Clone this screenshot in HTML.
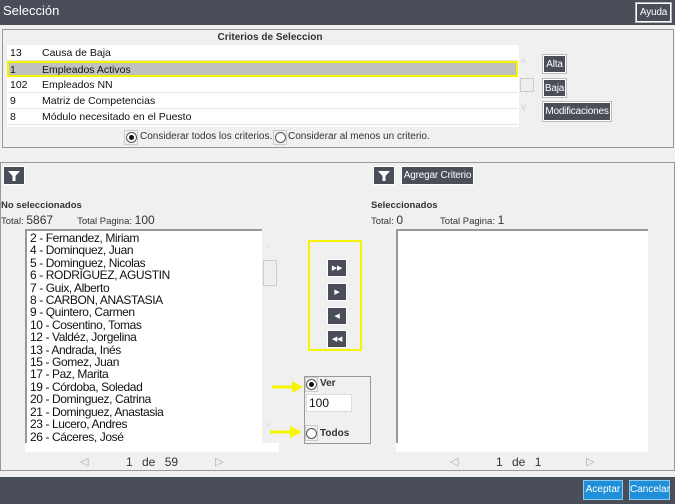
<!DOCTYPE html>
<html><head><meta charset="utf-8"><style>
*{margin:0;padding:0;box-sizing:border-box}
body{width:675px;height:504px;background:#f0f0f0;font-family:"Liberation Sans",sans-serif;position:relative;overflow:hidden;color:#111}
.a{position:absolute}
.dk{background:#4a4e59}
.btn{position:absolute;background:#4a4e59;color:#fff;font-size:10px;border:1px solid #fff;outline:1px solid #bbb;display:flex;align-items:center;justify-content:center;letter-spacing:-0.2px}
.row{position:absolute;left:0;width:511px;height:16px;font-size:10.5px;border-bottom:1px solid #e4e4e4;line-height:17px}
.row span{position:absolute}
.nm{position:absolute;left:3px;font-size:12px;letter-spacing:-0.4px;line-height:12.4px;white-space:nowrap}
.rad{position:absolute;width:11px;height:11px;border:1px solid #555;border-radius:50%;background:#fff}
.rad.on::after{content:"";position:absolute;left:2px;top:2px;width:5px;height:5px;border-radius:50%;background:#111}
.sm{font-size:10px;color:#333}
</style></head><body>
<div class="a dk" style="left:0;top:0;width:675px;height:25px"></div>
<div class="a" style="left:3px;top:3px;color:#fff;font-size:13px">Selección</div>
<div class="btn" style="left:636px;top:3px;width:35px;height:19px;font-size:10px">Ayuda</div>

<div class="a" style="left:2px;top:29px;width:672px;height:119px;border:1px solid #999"></div>
<div class="a" style="left:0;top:32px;width:540px;text-align:center;font-size:10px;font-weight:bold;color:#333">Criterios de Seleccion</div>
<div class="a" style="left:7px;top:45px;width:512px;height:82px;background:#fff;overflow:hidden">
<div class="row" style="top:0"><span style="left:3px">13</span><span style="left:35px">Causa de Baja</span></div>
<div class="row" style="top:16px;background:#c0c0c0;border:2px solid #f5f500;line-height:14px"><span style="left:1px">1</span><span style="left:33px">Empleados Activos</span></div>
<div class="row" style="top:32px"><span style="left:3px">102</span><span style="left:35px">Empleados NN</span></div>
<div class="row" style="top:48px"><span style="left:3px">9</span><span style="left:35px">Matriz de Competencias</span></div>
<div class="row" style="top:64px"><span style="left:3px">8</span><span style="left:35px">Módulo necesitado en el Puesto</span></div>
<div class="row" style="top:80px"><span style="left:3px">2</span><span style="left:35px">Por Edad</span></div>
</div>
<div class="a" style="left:521px;top:58px;color:#ccc;font-size:10px">^</div>
<div class="a" style="left:520px;top:78px;width:14px;height:14px;border:1px solid #ccc;background:#eee"></div>
<div class="a" style="left:521px;top:102px;color:#ccc;font-size:10px">v</div>
<div class="btn" style="left:543px;top:55px;width:23px;height:18px">Alta</div>
<div class="btn" style="left:543px;top:79px;width:23px;height:18px">Baja</div>
<div class="btn" style="left:543px;top:102px;width:68px;height:19px">Modificaciones</div>
<div class="a" style="left:124px;top:130px;width:14px;height:15px;border:1px solid #ccc"></div>
<div class="rad on" style="left:126px;top:132px"></div>
<div class="a sm" style="left:140px;top:131px">Considerar todos los criterios.</div>
<div class="a" style="left:273px;top:130px;width:14px;height:15px;border:1px solid #ccc"></div>
<div class="rad" style="left:275px;top:132px"></div>
<div class="a sm" style="left:288px;top:131px">Considerar al menos un criterio.</div>

<div class="a" style="left:0;top:162px;width:675px;height:309px;border:1px solid #999"></div>
<div class="btn" style="left:3px;top:166px;width:22px;height:19px;outline:none"><svg width="12" height="12" viewBox="0 0 12 12"><path d="M0 1H12L7.5 6V11H4.5V6Z" fill="#fff"/></svg></div>
<div class="btn" style="left:373px;top:166px;width:22px;height:19px;outline:none"><svg width="12" height="12" viewBox="0 0 12 12"><path d="M0 1H12L7.5 6V11H4.5V6Z" fill="#fff"/></svg></div>
<div class="btn" style="left:401px;top:166px;width:73px;height:19px;outline:none">Agregar Criterio</div>

<div class="a sm" style="left:1px;top:200px;font-weight:bold;font-size:9.5px">No seleccionados</div>
<div class="a sm" style="left:1px;top:213px;font-size:9.5px">Total: <span style="font-size:12px">5867</span><span style="margin-left:24px">Total Pagina:</span> <span style="font-size:12px">100</span></div>
<div class="a sm" style="left:371px;top:200px;font-weight:bold;font-size:9.5px">Seleccionados</div>
<div class="a sm" style="left:371px;top:213px;font-size:9.5px">Total: <span style="font-size:12px">0</span><span style="margin-left:37px">Total Pagina:</span> <span style="font-size:12px">1</span></div>

<div class="a" style="left:25px;top:229px;width:254px;height:223px;background:#fff"></div>
<div class="a" style="left:25px;top:229px;width:237px;height:214px;border-top:2px solid #999;border-left:2px solid #999;overflow:hidden">
<div class="nm" style="top:1px">2 - Fernandez, Miriam<br>4 - Dominquez, Juan<br>5 - Dominguez, Nicolas<br>6 - RODRIGUEZ, AGUSTIN<br>7 - Guix, Alberto<br>8 - CARBON, ANASTASIA<br>9 - Quintero, Carmen<br>10 - Cosentino, Tomas<br>12 - Valdéz, Jorgelina<br>13 - Andrada, Inés<br>15 - Gomez, Juan<br>17 - Paz, Marita<br>19 - Córdoba, Soledad<br>20 - Dominguez, Catrina<br>21 - Dominguez, Anastasia<br>23 - Lucero, Andres<br>26 - Cáceres, José</div>
</div>
<div class="a" style="left:262px;top:229px;width:17px;height:214px;background:#f0f0f0"></div>
<div class="a" style="left:265px;top:243px;color:#ddd;font-size:11px">^</div>
<div class="a" style="left:263px;top:260px;width:14px;height:26px;border:1px solid #ccc;background:#eee"></div>
<div class="a" style="left:265px;top:418px;color:#ddd;font-size:11px">v</div>

<div class="a" style="left:396px;top:229px;width:252px;height:223px;background:#fff"></div>
<div class="a" style="left:396px;top:229px;width:252px;height:214px;border-top:2px solid #999;border-left:2px solid #999"></div>

<div class="a" style="left:308px;top:240px;width:54px;height:111px;border:2px solid #f5f500"></div>
<div class="btn" style="left:327px;top:259px;width:20px;height:18px;outline:none;font-size:7px">▶▶</div>
<div class="btn" style="left:327px;top:283px;width:20px;height:18px;outline:none;font-size:7px">▶</div>
<div class="btn" style="left:327px;top:307px;width:20px;height:18px;outline:none;font-size:7px">◀</div>
<div class="btn" style="left:327px;top:330px;width:20px;height:18px;outline:none;font-size:7px">◀◀</div>

<div class="a" style="left:304px;top:376px;width:67px;height:68px;border:1px solid #999"></div>
<div class="a" style="left:305px;top:377px;width:13px;height:15px;border:1px solid #ccc"></div>
<div class="rad on" style="left:306px;top:379px"></div>
<div class="a" style="left:320px;top:378px;font-size:10px;font-weight:bold;color:#333">Ver</div>
<div class="a" style="left:306px;top:394px;width:46px;height:18px;background:#fff;border:1px solid #ddd;font-size:12px;padding:1px 2px">100</div>
<div class="a" style="left:305px;top:425px;width:13px;height:16px;border:1px solid #ccc"></div>
<div class="rad" style="left:306px;top:428px"></div>
<div class="a" style="left:320px;top:428px;font-size:10px;font-weight:bold;color:#333">Todos</div>
<svg class="a" style="left:270px;top:378px" width="36" height="60"><path d="M2 9H24" stroke="#f5f500" stroke-width="3"/><path d="M22 3L33 9L22 15Z" fill="#f5f500"/><path d="M0 54H22" stroke="#f5f500" stroke-width="3"/><path d="M20 48L32 54L20 60Z" fill="#f5f500"/></svg>

<div class="a" style="left:80px;top:455px;color:#aaa;font-size:11px">◁</div>
<div class="a" style="left:126px;top:455px;font-size:12px;color:#333;word-spacing:6px">1 de 59</div>
<div class="a" style="left:215px;top:455px;color:#aaa;font-size:11px">▷</div>
<div class="a" style="left:450px;top:455px;color:#aaa;font-size:11px">◁</div>
<div class="a" style="left:496px;top:455px;font-size:12px;color:#333;word-spacing:6px">1 de 1</div>
<div class="a" style="left:586px;top:455px;color:#aaa;font-size:11px">▷</div>

<div class="a dk" style="left:0;top:477px;width:675px;height:27px"></div>
<div class="a" style="left:583px;top:480px;width:40px;height:20px;background:#1e8fd8;border:1px solid #8cc8f0;color:#fff;font-size:10px;text-align:center;line-height:18px">Aceptar</div>
<div class="a" style="left:629px;top:480px;width:41px;height:20px;background:#1e8fd8;border:1px solid #8cc8f0;color:#fff;font-size:10px;text-align:center;line-height:18px">Cancelar</div>
</body></html>
